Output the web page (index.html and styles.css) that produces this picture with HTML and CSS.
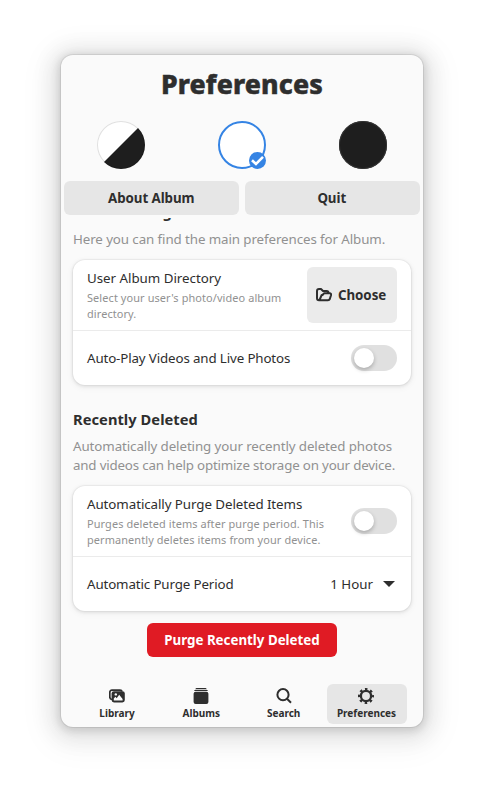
FILE: index.html
```html
<!DOCTYPE html>
<html lang="en">
<head>
<meta charset="utf-8">
<title>Preferences</title>
<link rel="stylesheet" href="styles.css">
</head>
<body>
<main class="window">
  <h1 class="title">Preferences</h1>
  <div class="themes">
    <span class="theme theme-system"></span>
    <span class="theme theme-light">
      <svg class="check" viewBox="0 0 17 17" width="17" height="17"><circle cx="8.5" cy="8.5" r="8.5" fill="#3584e4"/><path d="M3 8.2 7 12 14 4.9" fill="none" stroke="#fff" stroke-width="2.6"/></svg>
    </span>
    <span class="theme theme-dark"></span>
  </div>
  <div class="actions">
    <button class="button">About Album</button>
    <button class="button quit">Quit</button>
  </div>
  <div class="scroller">
    <section class="group group-first">
      <h2 class="heading">Album Settings</h2>
      <p class="description">Here you can find the main preferences for Album.</p>
      <div class="card">
        <div class="row row-tall">
          <div class="label"><div class="name name-wide">User Album Directory</div><div class="hint">Select your user's photo/video album<br>directory.</div></div>
          <button class="button choose">
            <svg viewBox="0 0 16 16" width="16" height="16" fill="none" stroke="#2e2e2e" stroke-width="2" stroke-linejoin="round"><path d="M3 13.2Q1 13.2 1 11V4Q1 2 3 2H5L7 4H10.5Q12.5 4 12.5 6M3 13.2H12Q13.3 13.2 13.8 12L15 8.2Q15.4 6.3 13.7 6.3H8L6.5 8H5.7L3.5 13"/></svg>
            <span>Choose</span>
          </button>
        </div>
        <div class="row">
          <div class="name name-tight">Auto-Play Videos and Live Photos</div>
          <span class="switch"></span>
        </div>
      </div>
    </section>
    <section class="group">
      <h2 class="heading">Recently Deleted</h2>
      <p class="description">Automatically deleting your recently deleted photos<br><span class="tight">and videos can help optimize storage on your device.</span></p>
      <div class="card">
        <div class="row row-tall">
          <div class="label"><div class="name">Automatically Purge Deleted Items</div><div class="hint">Purges deleted items after purge period. This<br>permanently deletes items from your device.</div></div>
          <span class="switch"></span>
        </div>
        <div class="row">
          <div class="name name-tight">Automatic Purge Period</div>
          <div class="select"><span>1 Hour</span><svg viewBox="0 0 12 6" width="12" height="6"><path d="M0 0H12L6 6Z" fill="#2e2e2e"/></svg></div>
        </div>
      </div>
      <button class="button danger">Purge Recently Deleted</button>
    </section>
  </div>
  <nav class="tabs">
    <a class="tab">
      <svg viewBox="0 0 16 16" width="16" height="16"><path d="M3 11.5Q.8 11.3.8 9V4.5Q.8 2.2 3 2.2H11Q12.8 2.2 13 3.5" fill="none" stroke="#2e2e2e" stroke-width="1.7"/><rect x="2.6" y="3.2" width="13.2" height="11.2" rx="2.4" fill="#2e2e2e"/><path d="M4.8 12.5V10.6L6.4 8.8 7.7 10.2 10.2 6.8 13.6 10.9V12.5Z" fill="#fafafa"/><circle cx="6.8" cy="6.4" r="1.2" fill="#fafafa"/></svg>
      <span>Library</span>
    </a>
    <a class="tab tab-albums">
      <svg viewBox="0 0 16 16" width="16" height="16" fill="#2e2e2e"><path d="M2.5 1Q2.5 0 3.5 0H12.5Q13.5 0 13.5 1Z"/><path d="M1.2 3Q1.2 1.7 2.7 1.7H13.3Q14.8 1.7 14.8 3Z"/><rect x=".6" y="3.8" width="14.8" height="12.2" rx="2"/></svg>
      <span>Albums</span>
    </a>
    <a class="tab">
      <svg viewBox="0 0 16 16" width="16" height="16" fill="none" stroke="#2e2e2e" stroke-width="2"><circle cx="7" cy="6.7" r="5.6"/><path d="M11 10.7 15 14.7"/></svg>
      <span>Search</span>
    </a>
    <a class="tab tab-active">
      <svg viewBox="0 0 16 16" width="16" height="16" fill="none" stroke="#2e2e2e"><circle cx="8" cy="8" r="5.1" stroke-width="2.3"/><circle cx="8" cy="8" r="6.8" stroke-width="2.4" stroke-dasharray="2.5 2.841" stroke-dashoffset="1.25"/></svg>
      <span>Preferences</span>
    </a>
  </nav>
</main>
</body>
</html>
```
FILE: styles.css
```css
* { box-sizing: border-box; }
body {
  margin: 0;
  padding: 55px 61px 67px;
  background: #fff;
  color: #2e2e2e;
  font: 13.333px/18px "Noto Sans", sans-serif;
}
h1, h2, p { margin: 0; }
.window {
  display: flex;
  flex-direction: column;
  width: 362px;
  height: 672px;
  border-radius: 12px;
  overflow: hidden;
  background: #fafafa;
  box-shadow: 0 0 0 1px rgba(0,0,0,.07), 0 2px 8px 2px rgba(0,0,0,.13), 0 3px 20px 10px rgba(0,0,0,.08), 0 6px 32px 16px rgba(0,0,0,.04);
}
.title {
  padding-top: 11px;
  height: 66px;
  font-size: 26.667px;
  line-height: 37px;
  font-weight: 800;
  -webkit-text-stroke: .5px #2e2e2e;
  letter-spacing: .15px;
  text-align: center;
}
.themes {
  display: flex;
  justify-content: space-between;
  padding: 0 36px;
  height: 60px;
}
.theme {
  position: relative;
  width: 48px;
  height: 48px;
  border-radius: 50%;
}
.theme-system {
  background: linear-gradient(135deg, #fff 49.5%, #1e1e1e 50.5%);
  box-shadow: inset 0 0 0 1px rgba(0,0,0,.12);
}
.theme-light { background: #fff; border: 2px solid #3584e4; }
.theme-dark { background: #1e1e1e; box-shadow: inset 0 0 0 1px #333; }
.check { position: absolute; right: -2px; bottom: -2px; }
.actions { display: flex; gap: 6px; padding: 0 3px; height: 37px; }
.button {
  flex: 1;
  height: 34px;
  padding: 0;
  border: 0;
  border-radius: 6px;
  background: #e6e6e6;
  color: #2e2e2e;
  font: 700 13.333px/18px "Noto Sans", sans-serif;
  letter-spacing: -.06px;
}
.quit { padding-right: 1px; }
.scroller { flex: 1; overflow: hidden; }
.group { padding: 0 12px; margin-top: 24px; }
.group-first { margin-top: -16px; }
.heading { font-size: 14.667px; line-height: 20px; font-weight: 700; letter-spacing: .05px; }
.group-first .heading { letter-spacing: -.45px; }
.description { margin: 8px 0 11px; line-height: 19px; color: #919191; letter-spacing: -.09px; }
.tight { letter-spacing: -.18px; }
.card {
  border-radius: 12px;
  background: #fff;
  box-shadow: 0 0 0 1px rgba(0,0,0,.03), 0 1px 3px 1px rgba(0,0,0,.07), 0 2px 6px 2px rgba(0,0,0,.03);
}
.row {
  display: flex;
  align-items: center;
  justify-content: space-between;
  height: 54px;
  padding: 0 14px;
}
.row-tall { height: 71px; border-bottom: 1px solid #ebebeb; }
.name { letter-spacing: -.07px; }
.name-tight { letter-spacing: -.13px; }
.name-wide { letter-spacing: -.02px; }
.hint { margin-top: 3px; font-size: 10.933px; line-height: 16px; letter-spacing: .1px; color: #919191; }
.choose {
  flex: none;
  display: flex;
  align-items: center;
  gap: 6px;
  width: 90px;
  height: 56px;
  padding-left: 9px;
  background: #ebebeb;
}
.switch {
  width: 46px;
  height: 26px;
  padding: 3px;
  border-radius: 13px;
  background: #e0e0e0;
}
.switch::before {
  content: "";
  display: block;
  width: 20px;
  height: 20px;
  border-radius: 50%;
  background: #fff;
  box-shadow: 0 2px 4px rgba(0,0,0,.25);
}
.select { display: flex; align-items: center; gap: 10px; padding-right: 2px; }
.danger {
  display: block;
  width: 190px;
  margin: 12px auto 0;
  background: #e01b24;
  color: #fff;
  letter-spacing: 0;
}
.tabs { display: flex; justify-content: space-between; height: 43px; padding: 0 16px; }
.tab {
  display: flex;
  flex-direction: column;
  align-items: center;
  width: 80px;
  height: 40px;
  padding-top: 4px;
  border-radius: 6px;
  font-size: 10px;
  line-height: 14px;
  font-weight: 700;
}
.tab span { margin-top: 2px; }
.tab-albums { padding-left: 2px; }
.tab-active { background: #e6e6e6; padding-right: 1px; }
```
